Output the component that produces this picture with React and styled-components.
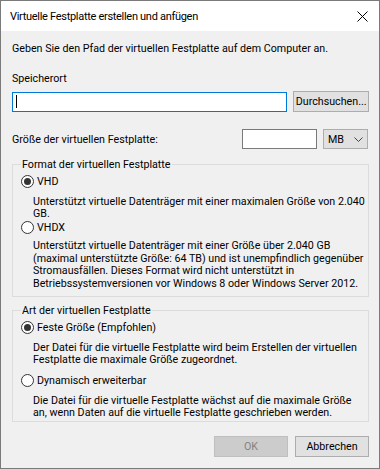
import styled, { createGlobalStyle } from "styled-components";

const Global = createGlobalStyle`
  html, body { margin: 0; padding: 0; background: #ffffff; }
  * { box-sizing: border-box; }
  body { font-family: Roboto, "Liberation Sans", sans-serif; font-size: 10.7px; color: #000; }
`;

const Window = styled.div`
  width: 380px;
  height: 469px;
  border: 1px solid #7a7a7a;
  background: #f0f0f0;
  display: flex;
  flex-direction: column;
`;

const TitleBar = styled.div`
  height: 30px;
  background: #ffffff;
  display: flex;
  align-items: center;
  justify-content: space-between;
  padding: 0 9px 0 9px;
  flex-shrink: 0;
`;

const Title = styled.span`
  font-size: 11px;
  letter-spacing: -0.3px;
  color: #000;
`;

const Body = styled.div`
  display: flex;
  flex-direction: column;
  padding: 0 10px 0 11px;
`;

const Text = styled.div`
  line-height: 13px;
  height: 13px;
  margin-top: ${p => p.$mt || 0}px;
  white-space: nowrap;
`;

const Row = styled.div`
  display: flex;
  align-items: center;
  margin-top: ${p => p.$mt || 0}px;
  height: ${p => p.$h || 21}px;
`;

const PathInput = styled.div`
  width: 277px;
  height: 20px;
  background: #fff;
  border: 1px solid #0078d7;
  display: flex;
  align-items: center;
  padding-left: 3px;
`;

const Caret = styled.span`
  width: 1px;
  height: 13px;
  background: #000;
`;

const Button = styled.div`
  height: ${p => p.$h || 21}px;
  width: ${p => p.$w}px;
  margin-left: ${p => p.$ml || 0}px;
  border: 1px solid ${p => (p.$disabled ? "#bfbfbf" : "#adadad")};
  background: ${p => (p.$disabled ? "#cccccc" : "#e1e1e1")};
  color: ${p => (p.$disabled ? "#838383" : "#000")};
  display: flex;
  align-items: center;
  justify-content: center;
  line-height: 13px;
`;

const SizeLabel = styled.span`
  flex: 1;
`;

const SizeInput = styled.div`
  width: 75px;
  height: 20px;
  background: #fff;
  border: 1px solid #7a7a7a;
`;

const Select = styled.div`
  width: 45px;
  height: 20px;
  margin-left: 6px;
  margin-right: 1px;
  background: #e1e1e1;
  border: 1px solid #adadad;
  display: flex;
  align-items: center;
  justify-content: space-between;
  padding: 0 4px 0 4px;
`;

const Group = styled.fieldset`
  margin: ${p => p.$mt || 0}px 0 0 0;
  width: 357px;
  height: ${p => p.$h}px;
  border: 1px solid #dcdcdc;
  padding: 0 0 0 8px;
  display: flex;
  flex-direction: column;
`;

const Legend = styled.legend`
  padding: 0 1px;
  margin-left: 0;
  line-height: 13px;
`;

const Option = styled.div`
  display: flex;
  align-items: center;
  gap: 3px;
  height: 13px;
  line-height: 13px;
  margin-top: ${p => p.$mt || 0}px;
`;

const Radio = styled.span`
  width: 13px;
  height: 13px;
  border-radius: 50%;
  border: 1px solid #333;
  background: #fff;
  display: flex;
  align-items: center;
  justify-content: center;
  &::after {
    content: "";
    width: 7px;
    height: 7px;
    border-radius: 50%;
    background: ${p => (p.$checked ? "#333" : "transparent")};
  }
`;

const Desc = styled.div`
  margin: ${p => p.$mt || 0}px 0 0 12px;
  line-height: ${p => p.$lh || 12}px;
  white-space: nowrap;
`;

const Footer = styled.div`
  display: flex;
  justify-content: flex-end;
  margin-top: 14px;
  width: 357px;
`;

export default function App() {
  return (
    <>
      <Global />
      <Window>
        <TitleBar>
          <Title>Virtuelle Festplatte erstellen und anfügen</Title>
          <svg width="11" height="11" viewBox="0 0 11 11" style={{ marginRight: 2 }}>
            <path d="M0.5 0.5 L10.5 10.5 M10.5 0.5 L0.5 10.5" stroke="#000" strokeWidth="1" />
          </svg>
        </TitleBar>
        <Body>
          <Text $mt={11}>Geben Sie den Pfad der virtuellen Festplatte auf dem Computer an.</Text>
          <Text $mt={17}>Speicherort</Text>
          <Row $mt={6} $h={21}>
            <PathInput>
              <Caret />
            </PathInput>
            <Button $w={76} $ml={6}>Durchsuchen...</Button>
          </Row>
          <Row $mt={17} $h={20}>
            <SizeLabel>Größe der virtuellen Festplatte:</SizeLabel>
            <SizeInput />
            <Select>
              <span>MB</span>
              <svg width="9" height="5" viewBox="0 0 9 5">
                <path d="M0.5 0.5 L4.5 4.5 L8.5 0.5" stroke="#444" strokeWidth="1" fill="none" />
              </svg>
            </Select>
          </Row>
          <Group $mt={9} $h={139}>
            <Legend>Format der virtuellen Festplatte</Legend>
            <Option $mt={4}>
              <Radio $checked />
              <span>VHD</span>
            </Option>
            <Desc $mt={8} $lh={12}>
              Unterstützt virtuelle Datenträger mit einer maximalen Größe von 2.040
              <br />
              GB.
            </Desc>
            <Option $mt={1}>
              <Radio />
              <span>VHDX</span>
            </Option>
            <Desc $mt={6} $lh={12.5}>
              Unterstützt virtuelle Datenträger mit einer Größe über 2.040 GB
              <br />
              (maximal unterstützte Größe: 64 TB) und ist unempfindlich gegenüber
              <br />
              Stromausfällen. Dieses Format wird nicht unterstützt in
              <br />
              Betriebssystemversionen vor Windows 8 oder Windows Server 2012.
            </Desc>
          </Group>
          <Group $mt={7} $h={118}>
            <Legend>Art der virtuellen Festplatte</Legend>
            <Option $mt={4}>
              <Radio $checked />
              <span>Feste Größe (Empfohlen)</span>
            </Option>
            <Desc $mt={8}>
              Der Datei für die virtuelle Festplatte wird beim Erstellen der virtuellen
              <br />
              Festplatte die maximale Größe zugeordnet.
            </Desc>
            <Option $mt={8}>
              <Radio />
              <span>Dynamisch erweiterbar</span>
            </Option>
            <Desc $mt={8}>
              Die Datei für die virtuelle Festplatte wächst auf die maximale Größe
              <br />
              an, wenn Daten auf die virtuelle Festplatte geschrieben werden.
            </Desc>
          </Group>
          <Footer>
            <Button $w={74} $disabled>OK</Button>
            <Button $w={74} $ml={7}>Abbrechen</Button>
          </Footer>
        </Body>
      </Window>
    </>
  );
}
